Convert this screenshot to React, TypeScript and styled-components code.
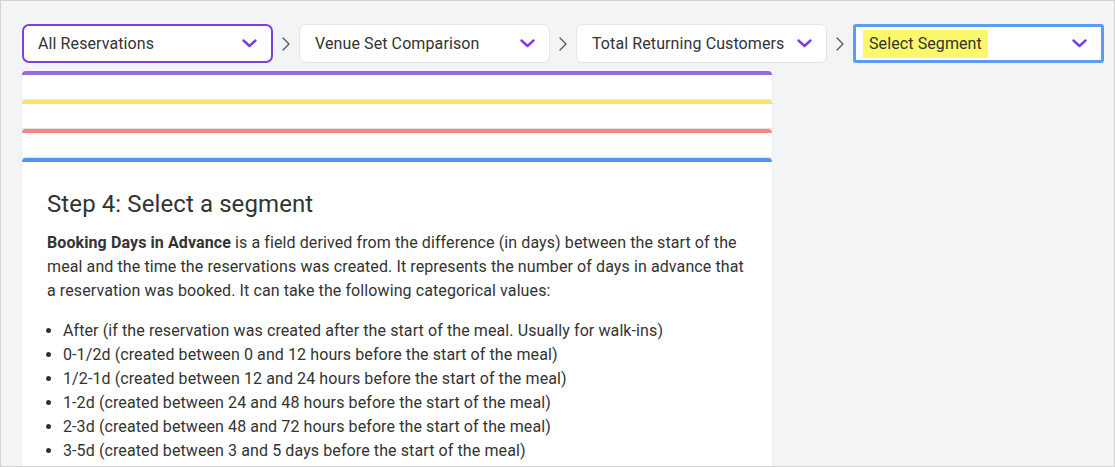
import React from "react";
import styled, { createGlobalStyle } from "styled-components";

const Global = createGlobalStyle`
  html, body { margin: 0; padding: 0; }
  body { font-family: Roboto, "Liberation Sans", sans-serif; color: #333; }
  * { box-sizing: border-box; }
`;

const Frame = styled.div`
  width: 1115px;
  height: 467px;
  overflow: hidden;
  background: #f3f4f6;
  border: 1px solid #d3d3d3;
  padding: 23px 0 0 21px;
`;

const Toolbar = styled.div`
  display: flex;
  align-items: center;
`;

type Variant = "active" | "normal" | "focus";

const Select = styled.div<{ $variant: Variant }>`
  width: 251px;
  height: 39px;
  display: flex;
  align-items: center;
  justify-content: space-between;
  background: #fff;
  font-size: 16px;
  color: #333;
  padding: 0 14px 0 ${(p) => (p.$variant === "active" ? 14 : p.$variant === "focus" ? 7 : 15)}px;
  border-radius: ${(p) => (p.$variant === "focus" ? 3 : 7)}px;
  border: ${(p) =>
    p.$variant === "active"
      ? "2px solid #7c3fe0"
      : p.$variant === "focus"
      ? "3px solid #5b9cf6"
      : "1px solid #e4e5e8"};
`;

const Label = styled.span<{ $highlight?: boolean }>`
  white-space: nowrap;
  letter-spacing: 0.1px;
  line-height: 22px;
  ${(p) => (p.$highlight ? `background: #fbf86b; padding: 3px 6px;` : "")}
`;

const Sep = styled.div`
  width: 26px;
  display: flex;
  justify-content: center;
`;

const Stack = styled.div`
  width: 750px;
  margin-top: 8px;
  display: flex;
  flex-direction: column;
  gap: 1px;
`;

const Card = styled.div<{ $color: string }>`
  background: #fff;
  border-top: 4px solid ${(p) => p.$color};
  border-radius: 4px 4px 0 0;
  box-shadow: 0 1px 2px rgba(0, 0, 0, 0.08);
  height: 28px;
`;

const ContentCard = styled.div`
  background: #fff;
  border-top: 4px solid #4f93f8;
  border-radius: 4px 4px 0 0;
  box-shadow: 0 1px 2px rgba(0, 0, 0, 0.08);
  padding: 28px 25px 20px 25px;
`;

const Heading = styled.h2`
  margin: 0 0 12px;
  font-size: 24px;
  font-weight: 400;
  line-height: 29px;
  letter-spacing: 0.1px;
  color: #333;
`;

const Para = styled.p`
  margin: 0 0 16px;
  font-size: 16px;
  line-height: 24px;
  letter-spacing: 0.1px;
  color: #333;
  white-space: nowrap;
  b { font-weight: 700; }
`;

const List = styled.ul`
  margin: 0;
  padding-left: 16px;
  font-size: 16px;
  line-height: 24px;
  letter-spacing: 0.1px;
  color: #333;
  white-space: nowrap;
`;

const Chevron = () => (
  <svg width="15" height="9" viewBox="0 0 15 9" fill="none">
    <path d="M1.5 1.5 L7.5 7 L13.5 1.5" stroke="#7b3fe2" strokeWidth="2.4" strokeLinecap="round" strokeLinejoin="round" />
  </svg>
);

const Arrow = () => (
  <svg width="8" height="14" viewBox="0 0 8 14" fill="none">
    <path d="M1 1 L7 7 L1 13" stroke="#555" strokeWidth="1.3" strokeLinecap="round" strokeLinejoin="round" />
  </svg>
);

const steps: { label: string; variant: Variant }[] = [
  { label: "All Reservations", variant: "active" },
  { label: "Venue Set Comparison", variant: "normal" },
  { label: "Total Returning Customers", variant: "normal" },
  { label: "Select Segment", variant: "focus" },
];

const items = [
  "After (if the reservation was created after the start of the meal. Usually for walk-ins)",
  "0-1/2d (created between 0 and 12 hours before the start of the meal)",
  "1/2-1d (created between 12 and 24 hours before the start of the meal)",
  "1-2d (created between 24 and 48 hours before the start of the meal)",
  "2-3d (created between 48 and 72 hours before the start of the meal)",
  "3-5d (created between 3 and 5 days before the start of the meal)",
];

export default function App() {
  return (
    <>
      <Global />
      <Frame>
        <Toolbar>
          {steps.map((s, i) => (
            <React.Fragment key={s.label}>
              {i > 0 && (
                <Sep>
                  <Arrow />
                </Sep>
              )}
              <Select $variant={s.variant}>
                <Label $highlight={s.variant === "focus"}>{s.label}</Label>
                <Chevron />
              </Select>
            </React.Fragment>
          ))}
        </Toolbar>
        <Stack>
          <Card $color="#9868e2" />
          <Card $color="#fde26a" />
          <Card $color="#f2897b" />
          <ContentCard>
            <Heading>Step 4: Select a segment</Heading>
            <Para>
              <b>Booking Days in Advance</b> is a field derived from the difference (in days) between the start of the
              <br />
              meal and the time the reservations was created. It represents the number of days in advance that
              <br />
              a reservation was booked. It can take the following categorical values:
            </Para>
            <List>
              {items.map((t) => (
                <li key={t}>{t}</li>
              ))}
            </List>
          </ContentCard>
        </Stack>
      </Frame>
    </>
  );
}
